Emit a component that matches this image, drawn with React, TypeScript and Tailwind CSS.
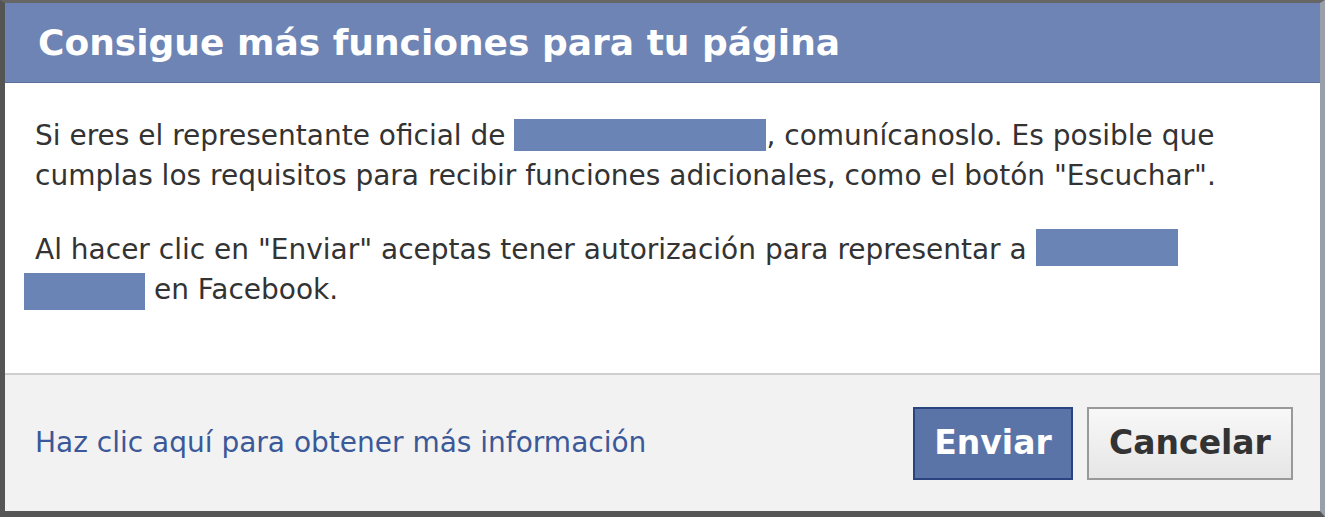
export default function App() {
  return (
    <div className="w-[1325px] h-[517px] bg-white">
      <div className="flex h-full flex-col border-x-[5px] border-t-[3px] border-b-[6px] border-l-[#555] border-r-[#9aa0aa] border-t-[#666] border-b-[#555]">
        {/* Title bar */}
        <div className="h-[80px] bg-[#6d84b4] flex items-center pl-[33px] border-b border-[#5b6f9c]">
          <h1 className="text-white font-bold text-[36px] font-['DejaVu_Sans',sans-serif]">
            Consigue más funciones para tu página
          </h1>
        </div>

        {/* Body */}
        <div className="h-[290px] bg-white px-[30px] pt-[33px] text-[#333] text-[28px] leading-[40px] font-['DejaVu_Sans',sans-serif]">
          <p>
            Si eres el representante oficial de{" "}
            <span className="inline-block align-[-6px] w-[252px] h-[32px] bg-[#6b84b6]" />
            , comunícanoslo. Es posible que
            <br />
            cumplas los requisitos para recibir funciones adicionales, como el botón "Escuchar".
          </p>
          <p className="mt-[33px]">
            Al hacer clic en "Enviar" aceptas tener autorización para representar a{" "}
            <span className="inline-block align-[-7px] w-[142px] h-[37px] bg-[#6b84b6]" />
            <br />
            <span className="inline-block align-[-11px] -ml-[11px] w-[121px] h-[37px] bg-[#6b84b6]" /> en Facebook.
          </p>
        </div>

        {/* Footer */}
        <div className="flex-1 bg-[#f2f2f2] border-t-2 border-[#cfcfcf] flex items-center justify-between pl-[30px] pr-[27px]">
          <a className="text-[#3b5998] text-[28px] font-['DejaVu_Sans',sans-serif]">
            Haz clic aquí para obtener más información
          </a>
          <div className="flex gap-[14px]">
            <button className="w-[160px] h-[73px] bg-[#5b74a8] border-2 border-[#29447e] text-white font-bold text-[33px] font-['DejaVu_Sans',sans-serif]">
              Enviar
            </button>
            <button className="w-[206px] h-[73px] bg-gradient-to-b from-[#f8f8f8] to-[#e6e6e6] border-2 border-[#999] text-[#333] font-bold text-[33px] font-['DejaVu_Sans',sans-serif]">
              Cancelar
            </button>
          </div>
        </div>
      </div>
    </div>
  );
}
